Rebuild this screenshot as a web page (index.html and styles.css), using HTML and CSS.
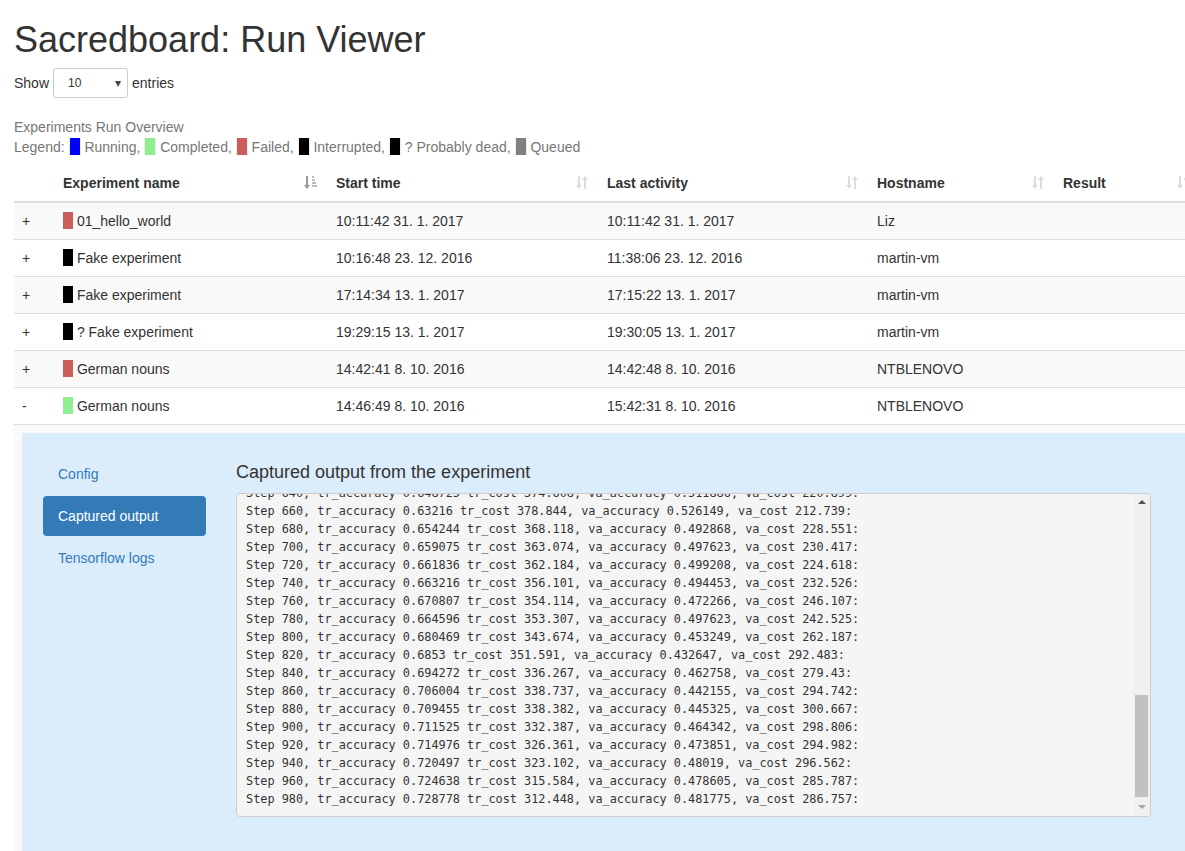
FILE: index.html
```html
<!DOCTYPE html>
<html>
<head>
<meta charset="utf-8">
<title>Sacredboard: Run Viewer</title>
<link rel="stylesheet" href="styles.css">
</head>
<body>
<div class="page">
  <h1 class="title">Sacredboard: Run Viewer</h1>
  <div class="length">
    <span>Show</span>
    <span class="select"><span>10</span><span class="caret">&#9662;</span></span>
    <span>entries</span>
  </div>
  <div class="overview">
    <div class="muted">Experiments Run Overview</div>
    <div class="muted legend">Legend: <i class="mk running"></i> Running, <i class="mk completed"></i> Completed, <i class="mk failed"></i> Failed, <i class="mk interrupted"></i> Interrupted, <i class="mk interrupted"></i> ? Probably dead, <i class="mk queued"></i> Queued</div>
  </div>
  <table class="runs">
    <colgroup>
      <col class="c0"><col class="c1"><col class="c2"><col class="c3"><col class="c4"><col class="c5">
    </colgroup>
    <thead>
      <tr>
        <th></th>
        <th><div class="th"><span>Experiment name</span>
          <svg class="sort" width="14" height="15" viewBox="0 0 14 15"><path d="M3 1v10" stroke="#999" stroke-width="2"/><path d="M0 10h6l-3 4z" fill="#999"/><rect x="8" y="1" width="2" height="2" fill="#bbb"/><rect x="8" y="4" width="3" height="2" fill="#bbb"/><rect x="8" y="7" width="4" height="2" fill="#bbb"/><rect x="8" y="10" width="5" height="2" fill="#bbb"/></svg></div></th>
        <th><div class="th"><span>Start time</span><svg class="sort" width="14" height="15" viewBox="0 0 14 15"><path d="M4 1v10M10 4v10" stroke="#ddd" stroke-width="2"/><path d="M1 10h6l-3 4zM7 5h6l-3-4z" fill="#ddd"/></svg></div></th>
        <th><div class="th"><span>Last activity</span><svg class="sort" width="14" height="15" viewBox="0 0 14 15"><path d="M4 1v10M10 4v10" stroke="#ddd" stroke-width="2"/><path d="M1 10h6l-3 4zM7 5h6l-3-4z" fill="#ddd"/></svg></div></th>
        <th><div class="th"><span>Hostname</span><svg class="sort" width="14" height="15" viewBox="0 0 14 15"><path d="M4 1v10M10 4v10" stroke="#ddd" stroke-width="2"/><path d="M1 10h6l-3 4zM7 5h6l-3-4z" fill="#ddd"/></svg></div></th>
        <th><div class="th"><span>Result</span><svg class="sort" width="14" height="15" viewBox="0 0 14 15"><path d="M4 1v10M10 4v10" stroke="#ddd" stroke-width="2"/><path d="M1 10h6l-3 4zM7 5h6l-3-4z" fill="#ddd"/></svg></div></th>
      </tr>
    </thead>
    <tbody>
      <tr class="odd"><td>+</td><td><i class="mk failed"></i> 01_hello_world</td><td>10:11:42 31. 1. 2017</td><td>10:11:42 31. 1. 2017</td><td>Liz</td><td></td></tr>
      <tr><td>+</td><td><i class="mk interrupted"></i> Fake experiment</td><td>10:16:48 23. 12. 2016</td><td>11:38:06 23. 12. 2016</td><td>martin-vm</td><td></td></tr>
      <tr class="odd"><td>+</td><td><i class="mk interrupted"></i> Fake experiment</td><td>17:14:34 13. 1. 2017</td><td>17:15:22 13. 1. 2017</td><td>martin-vm</td><td></td></tr>
      <tr><td>+</td><td><i class="mk interrupted"></i> ? Fake experiment</td><td>19:29:15 13. 1. 2017</td><td>19:30:05 13. 1. 2017</td><td>martin-vm</td><td></td></tr>
      <tr class="odd"><td>+</td><td><i class="mk failed"></i> German nouns</td><td>14:42:41 8. 10. 2016</td><td>14:42:48 8. 10. 2016</td><td>NTBLENOVO</td><td></td></tr>
      <tr><td>-</td><td><i class="mk completed"></i> German nouns</td><td>14:46:49 8. 10. 2016</td><td>15:42:31 8. 10. 2016</td><td>NTBLENOVO</td><td></td></tr>
      <tr class="odd detail-row">
        <td colspan="6">
          <div class="detail">
            <ul class="pills">
              <li><a>Config</a></li>
              <li class="active"><a>Captured output</a></li>
              <li><a>Tensorflow logs</a></li>
            </ul>
            <div class="content">
              <h4 class="heading">Captured output from the experiment</h4>
              <div class="output">
                <pre class="log">Step 640, tr_accuracy 0.648725 tr_cost 374.608, va_accuracy 0.511886, va_cost 220.899:
Step 660, tr_accuracy 0.63216 tr_cost 378.844, va_accuracy 0.526149, va_cost 212.739:
Step 680, tr_accuracy 0.654244 tr_cost 368.118, va_accuracy 0.492868, va_cost 228.551:
Step 700, tr_accuracy 0.659075 tr_cost 363.074, va_accuracy 0.497623, va_cost 230.417:
Step 720, tr_accuracy 0.661836 tr_cost 362.184, va_accuracy 0.499208, va_cost 224.618:
Step 740, tr_accuracy 0.663216 tr_cost 356.101, va_accuracy 0.494453, va_cost 232.526:
Step 760, tr_accuracy 0.670807 tr_cost 354.114, va_accuracy 0.472266, va_cost 246.107:
Step 780, tr_accuracy 0.664596 tr_cost 353.307, va_accuracy 0.497623, va_cost 242.525:
Step 800, tr_accuracy 0.680469 tr_cost 343.674, va_accuracy 0.453249, va_cost 262.187:
Step 820, tr_accuracy 0.6853 tr_cost 351.591, va_accuracy 0.432647, va_cost 292.483:
Step 840, tr_accuracy 0.694272 tr_cost 336.267, va_accuracy 0.462758, va_cost 279.43:
Step 860, tr_accuracy 0.706004 tr_cost 338.737, va_accuracy 0.442155, va_cost 294.742:
Step 880, tr_accuracy 0.709455 tr_cost 338.382, va_accuracy 0.445325, va_cost 300.667:
Step 900, tr_accuracy 0.711525 tr_cost 332.387, va_accuracy 0.464342, va_cost 298.806:
Step 920, tr_accuracy 0.714976 tr_cost 326.361, va_accuracy 0.473851, va_cost 294.982:
Step 940, tr_accuracy 0.720497 tr_cost 323.102, va_accuracy 0.48019, va_cost 296.562:
Step 960, tr_accuracy 0.724638 tr_cost 315.584, va_accuracy 0.478605, va_cost 285.787:
Step 980, tr_accuracy 0.728778 tr_cost 312.448, va_accuracy 0.481775, va_cost 286.757:</pre>
                <div class="scrollbar">
                  <span class="arrow up"></span>
                  <span class="track"><span class="thumb"></span></span>
                  <span class="arrow down"></span>
                </div>
              </div>
            </div>
          </div>
        </td>
      </tr>
    </tbody>
  </table>
</div>
</body>
</html>
```
FILE: styles.css
```css
html, body {
  margin: 0;
  overflow: hidden;
}
body {
  font-family: "Liberation Sans", Arial, sans-serif;
  font-size: 14px;
  line-height: 20px;
  color: #333;
  background: #fff;
}
.page {
  padding-left: 14px;
  width: 1210px;
}
.title {
  font-size: 36px;
  font-weight: normal;
  line-height: 39.6px;
  margin: 20px 0 8px;
  color: #333;
}
.length {
  display: flex;
  align-items: center;
  gap: 4px;
  height: 30px;
}
.select {
  display: inline-flex;
  align-items: center;
  justify-content: space-between;
  box-sizing: border-box;
  width: 75px;
  height: 30px;
  padding: 0 6px 0 14px;
  border: 1px solid #ccc;
  border-radius: 3px;
  font-size: 12px;
  background: #fff;
}
.caret {
  font-size: 12px;
  color: #444;
}
.overview {
  margin-top: 19px;
}
.muted {
  color: #777;
}
.mk {
  display: inline-block;
  width: 10px;
  height: 17px;
  vertical-align: -3px;
}
.legend .mk {
  border-left: 1px solid #f3f0e0;
  border-right: 1px solid #e8eef8;
}
.running { background: #0000ff; }
.completed { background: #90ee90; }
.failed { background: #cd5c5c; }
.interrupted { background: #000; }
.queued { background: #808080; }

.runs {
  margin-top: 8px;
  border-collapse: collapse;
  table-layout: fixed;
  width: 1186px;
}
.c0 { width: 41px; }
.c1 { width: 273px; }
.c2 { width: 271px; }
.c3 { width: 270px; }
.c4 { width: 186px; }
.c5 { width: 145px; }
.runs th {
  text-align: left;
  padding: 8px 8px 8px 8px;
  border-bottom: 2px solid #ddd;
  font-weight: bold;
}
.th {
  display: flex;
  justify-content: space-between;
  align-items: center;
  padding-right: 2px;
}
.sort {
  display: block;
}
.runs td {
  padding: 8px;
  border-top: 1px solid #ddd;
  white-space: nowrap;
  vertical-align: top;
}
.runs tr.odd td {
  background: #f9f9f9;
}
.runs tbody tr:first-child td {
  border-top: 0;
}
.detail-row td {
  padding: 8px 0 0 8px;
}
.detail {
  display: flex;
  background: #dbedfb;
  padding: 21px 0 34px 21px;
  height: 440px;
  box-sizing: border-box;
}
.pills {
  list-style: none;
  margin: 0;
  padding: 0;
  width: 163px;
  display: flex;
  flex-direction: column;
  gap: 2px;
}
.pills a {
  display: block;
  padding: 10px 15px;
  border-radius: 4px;
  color: #337ab7;
}
.pills .active a {
  background: #337ab7;
  color: #fff;
}
.content {
  margin-left: 30px;
  width: 915px;
}
.heading {
  font-size: 18px;
  font-weight: normal;
  line-height: 20px;
  margin: 8px 0 11px;
}
.output {
  position: relative;
  box-sizing: border-box;
  height: 324px;
  border: 1px solid #ccc;
  border-radius: 4px;
  background: #f5f5f5;
  overflow: hidden;
}
.log {
  margin: -10px 0 0;
  padding: 0 9px;
  font-family: "DejaVu Sans Mono", "Liberation Mono", monospace;
  font-size: 11.85px;
  line-height: 18px;
  color: #333;
}
.scrollbar {
  position: absolute;
  top: 0;
  right: 0;
  bottom: 0;
  width: 17px;
  background: #f0f0f0;
  display: flex;
  flex-direction: column;
}
.arrow {
  height: 17px;
  display: flex;
  justify-content: center;
  align-items: center;
}
.arrow::before {
  content: "";
  border-left: 4px solid transparent;
  border-right: 4px solid transparent;
}
.arrow.up::before {
  border-bottom: 4px solid #505050;
}
.arrow.down::before {
  border-top: 4px solid #a3a3a3;
}
.track {
  flex: 1;
  display: flex;
  flex-direction: column;
  justify-content: flex-end;
  padding: 0 2px 2px;
}
.thumb {
  height: 102px;
  background: #c1c1c1;
}
```
